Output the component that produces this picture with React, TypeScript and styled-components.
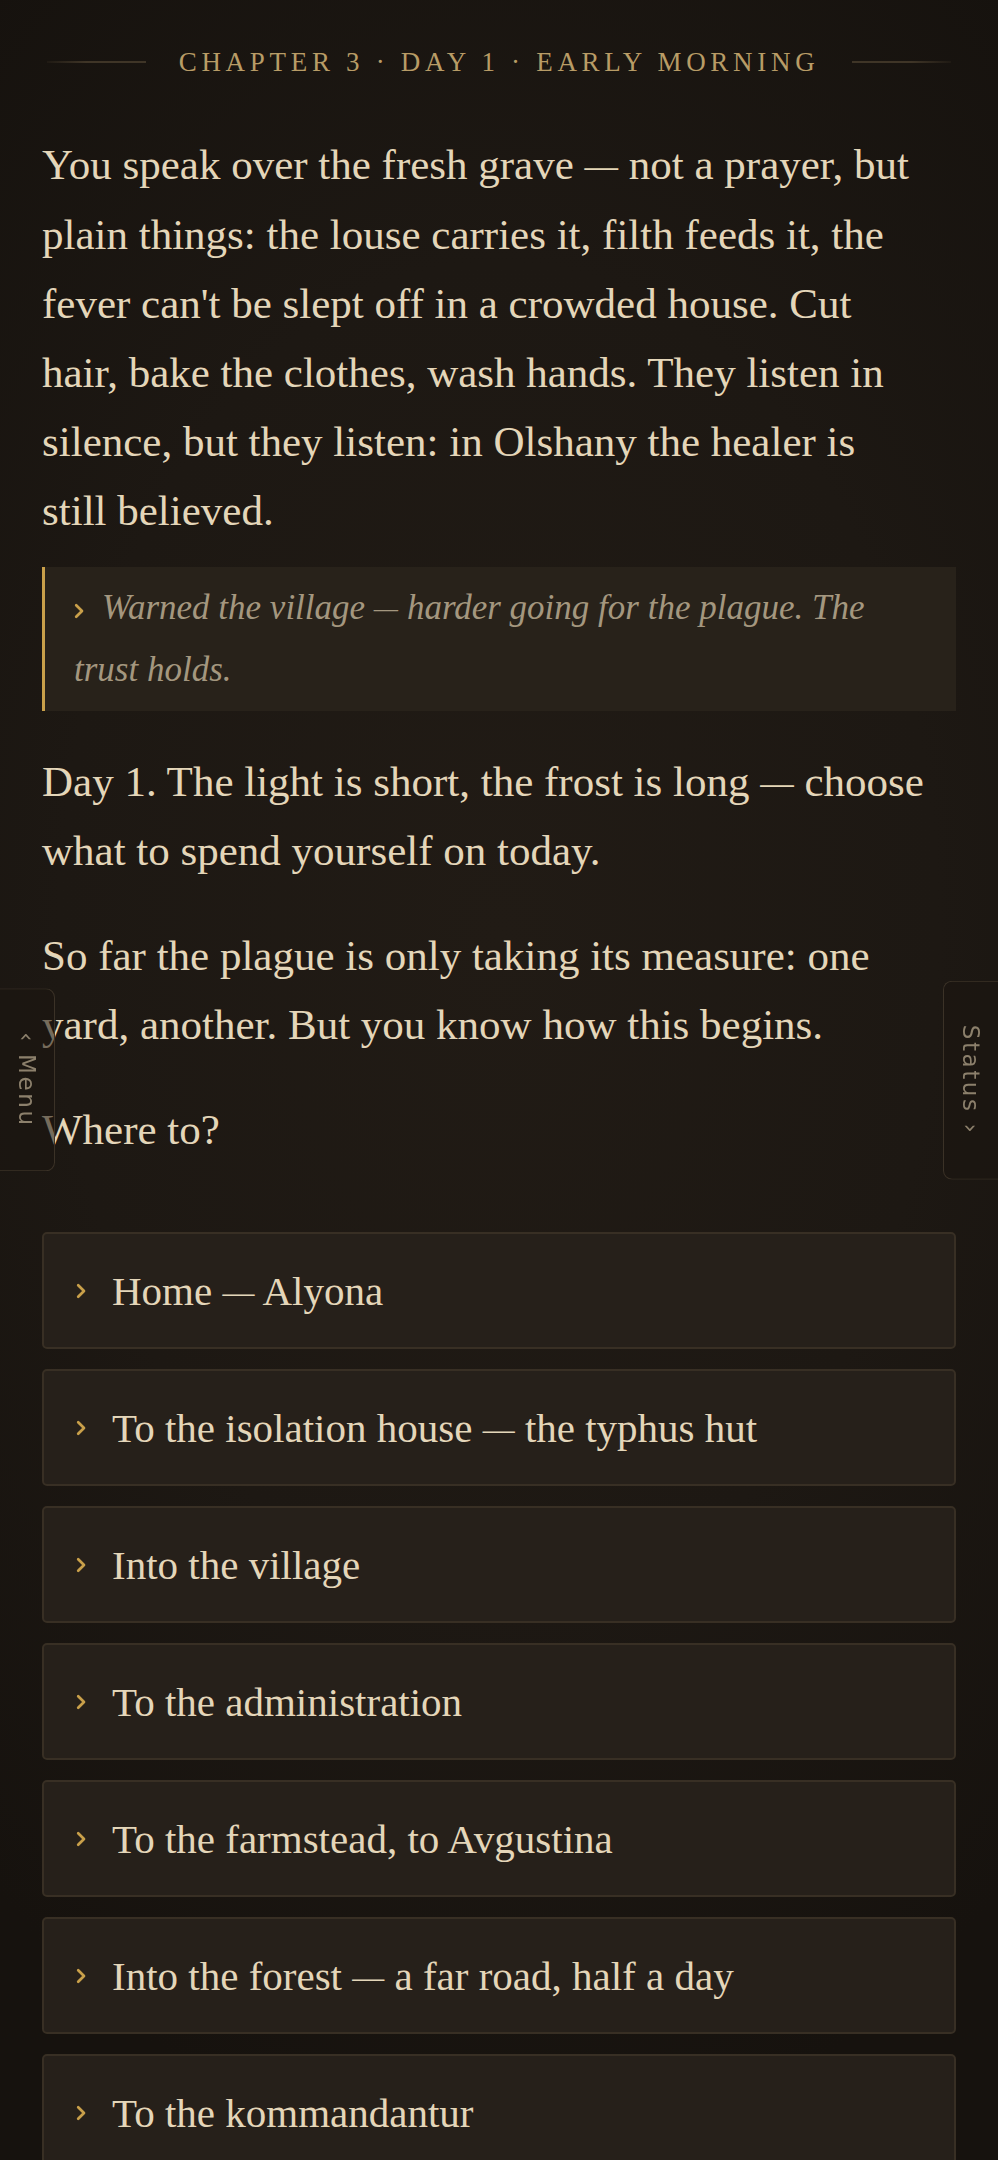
import React from "react"
import styled, { createGlobalStyle } from "styled-components"

const GlobalStyle = createGlobalStyle`
  html, body {
    margin: 0;
    padding: 0;
    background: #1a1511;
  }

  * {
    box-sizing: border-box;
  }
`

const Page = styled.main`
  min-height: 2160px;
  padding: 44px 42px 60px;
  background: radial-gradient(ellipse 80% 55% at 50% 42%, #211b15 0%, #1d1813 55%, #16120e 100%);
  font-family: "Liberation Serif", "DejaVu Serif", serif;
  color: #e4d6b9;
`

const ChapterHeader = styled.header`
  display: flex;
  align-items: center;
  gap: 33px;
  height: 36px;
  padding: 0 5px;
  margin-bottom: 50px;
`

const Rule = styled.span<{ $side: "left" | "right" }>`
  flex: 1;
  height: 2px;
  background: linear-gradient(
    to ${props => (props.$side === "left" ? "right" : "left")},
    rgba(64, 53, 38, 0.2),
    #3f3527 40%
  );
`

const ChapterTitle = styled.h2`
  margin: 0;
  font-weight: 400;
  font-size: 27px;
  line-height: 36px;
  letter-spacing: 4.7px;
  text-transform: uppercase;
  white-space: nowrap;
  color: #b89c66;
`

const Prose = styled.p<{ $after?: number }>`
  max-width: 885px;
  margin: 0 0 ${props => props.$after ?? 36}px;
  font-size: 43px;
  line-height: 69px;
`

const Dash = styled.span`
  font-size: 0.78em;
  vertical-align: 0.07em;
`

const Outcome = styled.aside`
  margin: 0 0 36px;
  padding: 10px 29px;
  border-left: 3px solid #c9a04a;
  background: #28221a;
  font-style: italic;
  font-size: 35px;
  line-height: 62px;
  color: #a4977f;
`

const OutcomeMark = styled.span`
  display: inline-block;
  margin-right: 18px;
`

const ChoiceList = styled.nav`
  display: flex;
  flex-direction: column;
  gap: 20px;
  margin-top: 68px;
`

const Choice = styled.button`
  display: flex;
  align-items: center;
  gap: 26px;
  height: 117px;
  padding: 0 0 0 32px;
  border: 2px solid #382f24;
  border-radius: 5px;
  background: #26201a;
  font-family: "Liberation Serif", "DejaVu Serif", serif;
  font-size: 41px;
  color: #e4d6b9;
  text-align: left;
  cursor: pointer;

  :hover {
    border-color: #4a3e2c;
  }
`

const SideTab = styled.button<{ $side: "left" | "right" }>`
  position: fixed;
  top: 50%;
  ${props => props.$side}: 0;
  transform: translateY(-50%);
  display: flex;
  align-items: center;
  justify-content: center;
  width: 55px;
  padding: 43px 0;
  background: rgba(27, 22, 17, 0.55);
  border: 1.5px solid #3b3227;
  border-${props => props.$side}: none;
  border-radius: ${props => (props.$side === "left" ? "0 9px 9px 0" : "9px 0 0 9px")};
  cursor: pointer;
`

const TabLabel = styled.span`
  writing-mode: vertical-rl;
  font-family: "DejaVu Sans", "Liberation Sans", sans-serif;
  font-size: 23px;
  letter-spacing: 2.6px;
  color: #8c806c;
`

const Chevron = () => (
  <svg width="10" height="16" viewBox="0 0 10 16">
    <path
      d="M2.2 2.2 L8 8 L2.2 13.8"
      fill="none"
      stroke="#c9a04a"
      strokeWidth="2.7"
      strokeLinecap="round"
      strokeLinejoin="round"
    />
  </svg>
)

// em dashes in the source face are narrower than the Liberation ones
const withDashes = (text: string) =>
  text.split("—").map((part, i) => (
    <React.Fragment key={i}>
      {i > 0 && <Dash>—</Dash>}
      {part}
    </React.Fragment>
  ))

const choices = [
  "Home — Alyona",
  "To the isolation house — the typhus hut",
  "Into the village",
  "To the administration",
  "To the farmstead, to Avgustina",
  "Into the forest — a far road, half a day",
  "To the kommandantur",
]

const App = () => (
  <>
    <GlobalStyle />
    <Page>
      <ChapterHeader>
        <Rule $side="left" />
        <ChapterTitle>Chapter 3 · Day 1 · Early morning</ChapterTitle>
        <Rule $side="right" />
      </ChapterHeader>

      <Prose $after={22}>
        {withDashes(
          "You speak over the fresh grave — not a prayer, but plain things: the louse carries it, filth feeds it, the fever can't be slept off in a crowded house. Cut hair, bake the clothes, wash hands. They listen in silence, but they listen: in Olshany the healer is still believed."
        )}
      </Prose>

      <Outcome>
        <OutcomeMark>
          <Chevron />
        </OutcomeMark>
        {withDashes("Warned the village — harder going for the plague. The trust holds.")}
      </Outcome>

      <Prose>
        {withDashes("Day 1. The light is short, the frost is long — choose what to spend yourself on today.")}
      </Prose>
      <Prose>
        So far the plague is only taking its measure: one yard, another. But you know how this begins.
      </Prose>
      <Prose $after={0}>Where to?</Prose>

      <ChoiceList>
        {choices.map(choice => (
          <Choice key={choice}>
            <Chevron />
            <span>{withDashes(choice)}</span>
          </Choice>
        ))}
      </ChoiceList>
    </Page>

    <SideTab $side="left">
      <TabLabel>‹ Menu</TabLabel>
    </SideTab>
    <SideTab $side="right">
      <TabLabel>Status ›</TabLabel>
    </SideTab>
  </>
)

export default App
